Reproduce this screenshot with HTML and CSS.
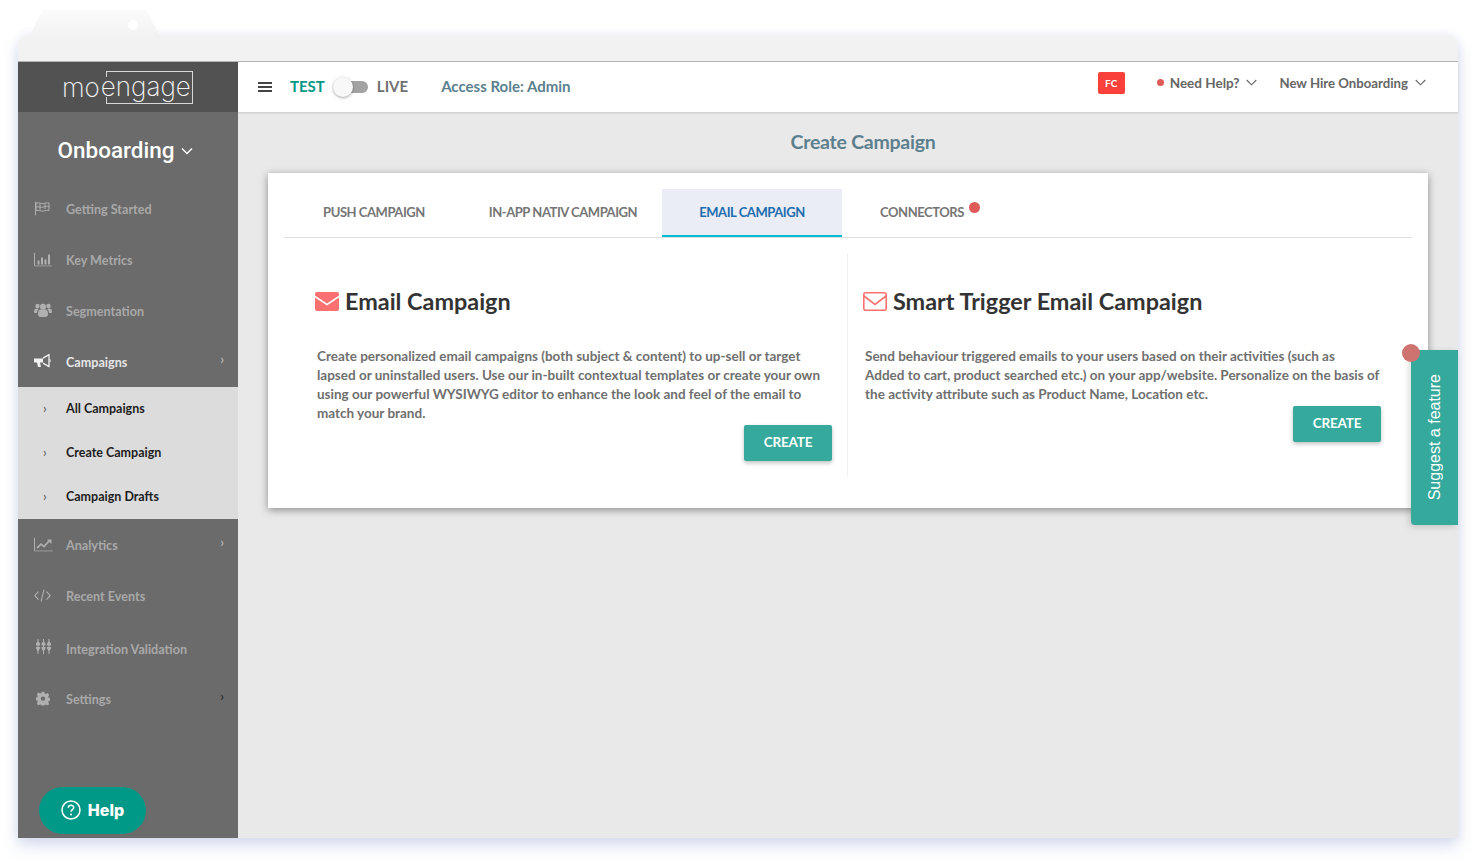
FILE: index.html
```html
<!DOCTYPE html>
<html>
<head>
    <meta charset="UTF-8">
    <title>Create Campaign</title>
    <link rel="stylesheet" href="styles.css">
</head>
<body>
    <div class="frame">
        <div class="notch"><span class="notch-dot"></span></div>
        <div class="strip"></div>
        <div class="app">
            <aside class="sidebar">
                <div class="logo"><span class="logo-mo">mo</span><span class="logo-box"><span class="logo-word">engage</span></span></div>
                <div class="workspace">Onboarding
                    <svg class="ws-caret" width="12" height="8" viewBox="0 0 12 8"><path d="M1 1.500l5 5 5-5" fill="none" stroke="#fff" stroke-width="1.400"/></svg>
                </div>
                <nav class="nav">
                    <div class="nav-item">
                        <svg class="nav-icon" width="18" height="14" viewBox="0 0 18 14"><path d="M1.500 0v14M2 1.500c3-1 5 1 7 .5s4-1 6-.5v7.500c-2-.5-4 0-6 .5s-4-1.500-7-.5zM2 5.500c3-1 5 1 7 0s4-1 6-.5M6 2v6M11 1.500v6" fill="none" stroke="#b0b0b0" stroke-width="1"/></svg>
                        <span>Getting Started</span>
                    </div>
                    <div class="nav-item">
                        <svg class="nav-icon" width="18" height="14" viewBox="0 0 18 14"><path d="M.5 0v13.500H18" fill="none" stroke="#b0b0b0"/><path d="M3.500 8h2v4h-2zM7 5h2v7H7zM10.500 7h2v5h-2zM14 2h2v10h-2z" fill="#b0b0b0"/></svg>
                        <span>Key Metrics</span>
                    </div>
                    <div class="nav-item">
                        <svg class="nav-icon" width="18" height="15" viewBox="0 0 18 15"><circle cx="3.500" cy="3" r="2.200" fill="#b0b0b0"/><circle cx="14.500" cy="3" r="2.200" fill="#b0b0b0"/><circle cx="9" cy="3.800" r="3" fill="#b0b0b0"/><path d="M0 9c0-3 1-3.500 3-3.500 1 0 1 .5 1.500 1-1 1-1.500 2-1.500 3.500H1c-.5 0-1-.3-1-1zM18 9c0-3-1-3.500-3-3.500-1 0-1 .5-1.500 1 1 1 1.500 2 1.500 3.500h2c.5 0 1-.3 1-1zM4 11c0-3 1-4.500 2.500-4.500h5C13 6.500 14 8 14 11c0 2-1 3-2.500 3h-5C5 14 4 13 4 11z" fill="#b0b0b0"/></svg>
                        <span>Segmentation</span>
                    </div>
                    <div class="nav-item nav-open">
                        <svg class="nav-icon" width="17" height="14" viewBox="0 0 17 14"><path d="M0 5h9v4H6l1 4.500H4L3 9H1c-.600 0-1-.4-1-1zM9 5l5-3.500" fill="#f2f2f2"/><path d="M9 4.500L15 1v12L9 9.500" fill="none" stroke="#f2f2f2" stroke-width="1.300"/><path d="M15.500 5.500c1 .5 1 2.500 0 3" fill="none" stroke="#f2f2f2"/></svg>
                        <span>Campaigns</span>
                        <span class="nav-arrow">&#8250;</span>
                    </div>
                    <div class="subnav">
                        <div class="sub-item"><span class="sub-arrow">&#8250;</span>All Campaigns</div>
                        <div class="sub-item"><span class="sub-arrow">&#8250;</span>Create Campaign</div>
                        <div class="sub-item"><span class="sub-arrow">&#8250;</span>Campaign Drafts</div>
                    </div>
                    <div class="nav-item">
                        <svg class="nav-icon" width="19" height="14" viewBox="0 0 19 14"><path d="M.5 0v13.500H19" fill="none" stroke="#b0b0b0"/><path d="M3 10.500l4-4 3 2.500 5-5.500" fill="none" stroke="#b0b0b0" stroke-width="1.600"/><path d="M13 2h4.500v4.500z" fill="#b0b0b0"/></svg>
                        <span>Analytics</span>
                        <span class="nav-arrow">&#8250;</span>
                    </div>
                    <div class="nav-item">
                        <svg class="nav-icon" width="17" height="13" viewBox="0 0 17 13"><path d="M4.500 2.500L.8 6.500l3.700 4M12.500 2.500l3.700 4-3.700 4M10 .5l-3 12" fill="none" stroke="#b0b0b0" stroke-width="1.100"/></svg>
                        <span>Recent Events</span>
                    </div>
                    <div class="nav-item nav-tall">
                        <svg class="nav-icon nav-icon-up" width="15" height="15" viewBox="0 0 15 15"><path d="M2 0v15M7.500 0v15M13 0v15" stroke="#b0b0b0" stroke-width="1"/><path d="M0 4.500L2 2l2 2.500v2H0zM5.500 4.500l2-2.500 2 2.500v2h-4zM11 4.500L13 2l2 2.500v2h-4zM0 8h4v1.500l-2 3-2-3zM5.500 8h4v1.500l-2 3-2-3zM11 8h4v1.500l-2 3-2-3z" fill="#b0b0b0"/></svg>
                        <span>Integration Validation</span>
                    </div>
                    <div class="nav-item">
                        <svg class="nav-icon nav-icon-gear" width="14" height="14" viewBox="0 0 14 14"><path fill-rule="evenodd" d="M5.800 0h2.400l.4 1.900 1.300.6 1.700-1 1.600 1.700-1 1.600.5 1.300 2 .5v2.400l-2 .4-.5 1.300 1 1.700-1.600 1.600-1.700-1-1.300.5-.4 2H5.800l-.4-2-1.300-.5-1.700 1L.8 11.900l1-1.700-.5-1.300-1.900-.4V6.100l1.900-.5.5-1.300-1-1.600 1.600-1.700 1.700 1 1.300-.6zM7 4.800a2.200 2.200 0 1 0 0 4.400 2.200 2.200 0 0 0 0-4.400z" fill="#b0b0b0"/></svg>
                        <span>Settings</span>
                        <span class="nav-arrow nav-arrow-dark">&#8250;</span>
                    </div>
                </nav>
                <div class="help-btn">
                    <svg width="20" height="20" viewBox="0 0 20 20"><circle cx="10" cy="10" r="9" fill="none" stroke="#fff" stroke-width="1.500"/><path d="M7.300 7.800c0-3.400 5.400-3.400 5.400-.2 0 2-2.700 2-2.700 4.200" fill="none" stroke="#fff" stroke-width="1.500"/><circle cx="10" cy="14.500" r="1" fill="#fff"/></svg>
                    <span>Help</span>
                </div>
            </aside>
            <div class="main">
                <header class="topbar">
                    <div class="burger"><i></i><i></i><i></i></div>
                    <span class="env-test">TEST</span>
                    <span class="toggle"><span class="toggle-knob"></span></span>
                    <span class="env-live">LIVE</span>
                    <span class="role">Access Role: Admin</span>
                    <span class="badge">FC</span>
                    <span class="top-link need-help"><span class="red-dot"></span>Need Help?
                        <svg width="11" height="7" viewBox="0 0 11 7"><path d="M.7 1l4.800 4.800L10.300 1" fill="none" stroke="#666" stroke-width="1.100"/></svg>
                    </span>
                    <span class="top-link project">New Hire Onboarding
                        <svg width="11" height="7" viewBox="0 0 11 7"><path d="M.7 1l4.800 4.800L10.300 1" fill="none" stroke="#666" stroke-width="1.100"/></svg>
                    </span>
                </header>
                <section class="content">
                    <h2 class="page-title">Create Campaign</h2>
                    <div class="card">
                        <div class="tabs">
                            <div class="tab tab-push">PUSH CAMPAIGN</div>
                            <div class="tab tab-inapp">IN-APP NATIV CAMPAIGN</div>
                            <div class="tab tab-active">EMAIL CAMPAIGN</div>
                            <div class="tab tab-conn">CONNECTORS<span class="tab-dot"></span></div>
                        </div>
                        <div class="columns">
                            <div class="col col-left">
                                <h3 class="col-title">
                                    <svg width="24" height="19" viewBox="0 0 24 19"><path d="M2 0h20c1.100 0 2 .9 2 2v1.500L12 11.500 0 3.500V2C0 .9.900 0 2 0zM0 5.500l12 8 12-8V17c0 1.100-.9 2-2 2H2c-1.100 0-2-.9-2-2z" fill="#fb7070"/></svg>
                                    Email Campaign
                                </h3>
                                <p class="col-text">Create personalized email campaigns (both subject &amp; content) to up-sell or target lapsed or uninstalled users. Use our in-built contextual templates or create your own using our powerful WYSIWYG editor to enhance the look and feel of the email to match your brand.</p>
                                <div class="col-action"><button class="create-btn">CREATE</button></div>
                            </div>
                            <div class="col col-right">
                                <h3 class="col-title">
                                    <svg width="24" height="19" viewBox="0 0 24 19"><rect x=".8" y=".8" width="22.400" height="17.400" rx="2" fill="none" stroke="#fb7070" stroke-width="1.600"/><path d="M1 4l11 8.500L23 4" fill="none" stroke="#fb7070" stroke-width="1.600"/></svg>
                                    Smart Trigger Email Campaign
                                </h3>
                                <p class="col-text">Send behaviour triggered emails to your users based on their activities (such as<br>Added to cart, product searched etc.) on your app/website. Personalize on the basis of the activity attribute such as Product Name, Location etc.</p>
                                <div class="col-action"><button class="create-btn">CREATE</button></div>
                            </div>
                        </div>
                    </div>
                </section>
            </div>
            <div class="suggest"><span class="suggest-dot"></span><span class="suggest-text">Suggest a feature</span></div>
        </div>
    </div>
</body>
</html>
```

FILE: styles.css
```css
* {
    box-sizing: border-box;
}
html, body {
    margin: 0;
    height: 100%;
    overflow: hidden;
}
body {
    background-color: #fff;
    font-family: 'Lato', 'Noto Sans', sans-serif;
    padding: 35px 18px 24px;
}
.frame {
    position: relative;
    height: 803px;
    box-shadow: 0 8px 16px rgba(120,140,200,0.28), 0 0 10px rgba(120,140,200,0.12);
    border-radius: 10px 10px 0 0;
}
.notch {
    position: absolute;
    left: 12px;
    top: -25px;
    width: 130px;
    height: 26px;
    background: linear-gradient(#fbfbfb, #f2f2f2);
    clip-path: polygon(12px 0, 116px 0, 130px 100%, 0 100%);
}
.notch-dot {
    position: absolute;
    left: 98px;
    top: 10px;
    width: 10px;
    height: 10px;
    border-radius: 50%;
    background-color: #fff;
}
.strip {
    height: 27px;
    background-color: #f2f2f2;
    border-bottom: 1px solid #b4b4b4;
    border-radius: 10px 10px 0 0;
}
.app {
    position: relative;
    display: flex;
    height: 776px;
}

/* sidebar */
.sidebar {
    position: relative;
    width: 220px;
    flex-shrink: 0;
    background-color: #6b6b6b;
}
.logo {
    height: 50px;
    background-color: #525252;
    display: flex;
    align-items: center;
    padding-left: 44px;
    color: #f5f5f5;
    font-family: 'Inter', sans-serif;
    font-weight: 200;
    font-size: 26px;
}
.logo-box {
    width: 87px;
    height: 33px;
    margin-left: 6px;
    line-height: 30px;
    border: 1px solid #d8d8d8;
    border-left: none;
    white-space: nowrap;
    background:
        linear-gradient(#d8d8d8, #d8d8d8) 0 0 / 1px 5px no-repeat,
        linear-gradient(#d8d8d8, #d8d8d8) 0 100% / 1px 6px no-repeat;
}
.logo-word {
    margin-left: -5px;
}
.workspace {
    height: 76px;
    display: flex;
    align-items: center;
    justify-content: center;
    gap: 6px;
    color: #fff;
    font-family: 'Roboto', sans-serif;
    font-size: 22.500px;
    font-weight: 500;
    padding-right: 6px;
}
.ws-caret {
    margin-top: 2px;
}
.nav {
    margin-top: -4px;
}
.nav-item {
    position: relative;
    height: 51px;
    display: flex;
    align-items: center;
    padding-left: 48px;
    color: #a9a9a9;
    font-size: 12.600px;
    font-weight: 700;
}
.nav-open {
    color: #e6e6e6;
    height: 50px;
}
.nav-tall {
    height: 52px;
    padding-top: 2px;
}
.nav-icon {
    position: absolute;
    left: 16px;
    top: 50%;
    transform: translateY(-60%);
}
.nav-icon-up {
    left: 18px;
}
.nav-icon-gear {
    left: 18px;
}
.nav-arrow {
    position: absolute;
    right: 14px;
    top: 14px;
    font-size: 13px;
    color: #b5b5b5;
}
.nav-arrow-dark {
    color: #333;
}
.subnav {
    background-color: #dcdcdc;
    height: 132px;
    margin-bottom: 1px;
}
.sub-item {
    position: relative;
    height: 44px;
    display: flex;
    align-items: center;
    padding: 0 0 2px 48px;
    color: #1d1d1d;
    font-size: 12.500px;
    font-weight: 700;
}
.sub-arrow {
    position: absolute;
    left: 25px;
    top: 13px;
    font-size: 13px;
    font-weight: 400;
    color: #555;
}
.help-btn {
    position: absolute;
    left: 21px;
    bottom: 4px;
    width: 107px;
    height: 47px;
    padding-bottom: 1px;
    border-radius: 24px;
    background-color: #009886;
    color: #fff;
    display: flex;
    align-items: center;
    justify-content: center;
    gap: 7px;
    font-family: 'Inter', sans-serif;
    font-weight: 800;
    font-size: 16px;
}

/* main area */
.main {
    flex: 1;
    background-color: #e9e9e9;
    min-width: 0;
}
.topbar {
    position: relative;
    height: 50px;
    background-color: #fff;
    display: flex;
    align-items: center;
    padding: 0 0 3px 20px;
    box-shadow: 0 1px 2px rgba(0,0,0,0.15);
    font-size: 15px;
    font-weight: 700;
}
.burger {
    width: 14px;
    margin: 2px 18px 0 0;
}
.burger i {
    display: block;
    height: 2px;
    margin: 2px 0;
    background-color: #444;
}
.env-test {
    color: #009886;
}
.toggle {
    position: relative;
    display: block;
    width: 30px;
    height: 12px;
    margin: 2px 9px 0 13px;
    border-radius: 6px;
    background-color: #a3a3a3;
}
.toggle-knob {
    position: absolute;
    left: -5px;
    top: -4px;
    width: 20px;
    height: 20px;
    border-radius: 50%;
    background-color: #f8f8f8;
    box-shadow: 0 1px 3px rgba(0,0,0,0.35);
}
.env-live {
    color: #707070;
}
.role {
    margin-left: 33px;
    color: #5c7f8e;
}
.badge {
    margin-left: auto;
    width: 27px;
    height: 22px;
    margin-top: -6px;
    border-radius: 2px;
    background-color: #f9403a;
    color: #fff;
    font-size: 10px;
    display: flex;
    align-items: center;
    justify-content: center;
}
.top-link {
    display: flex;
    align-items: center;
    gap: 7px;
    margin-top: -6px;
    color: #666;
    font-size: 13.500px;
}
.need-help {
    margin-left: 32px;
}
.project {
    margin-left: 22px;
    margin-right: 32px;
    font-size: 13.200px;
}
.red-dot {
    width: 7px;
    height: 7px;
    border-radius: 50%;
    background-color: #e05a5a;
    margin-right: -1px;
}
.content {
    padding: 0 30px;
}
.page-title {
    margin: 0;
    height: 61px;
    line-height: 60px;
    padding-left: 30px;
    text-align: center;
    color: #5c7f8e;
    font-size: 19.500px;
    letter-spacing: -0.25px;
    font-weight: 700;
}
.card {
    height: 335px;
    background-color: #fff;
    padding: 16px 16px 0;
    box-shadow: 0 2px 8px rgba(0,0,0,0.4);
}
.tabs {
    display: flex;
    height: 49px;
    border-bottom: 1px solid #dedede;
}
.tab {
    height: 48px;
    padding-bottom: 2px;
    display: flex;
    align-items: center;
    justify-content: center;
    color: #757575;
    font-size: 13px;
    letter-spacing: -0.45px;
    font-weight: 700;
}
.tab-push { width: 180px; }
.tab-inapp { width: 198px; }
.tab-active {
    width: 180px;
    padding-bottom: 0;
    color: #1c6cae;
    background-color: #eaedf6;
    border-bottom: 2px solid #00bcd4;
}
.tab-conn {
    position: relative;
    width: 160px;
}
.tab-dot {
    position: absolute;
    left: 127px;
    top: 13px;
    width: 11px;
    height: 11px;
    border-radius: 50%;
    background-color: #e05a5a;
}
.columns {
    display: flex;
    margin-top: 15px;
    height: 224px;
}
.col-left {
    width: 564px;
    padding: 32px 15px 0 31px;
    border-right: 1px solid #f0f0f0;
}
.col-right {
    flex: 1;
    padding: 32px 31px 0 15px;
}
.col-title {
    margin: 0;
    display: flex;
    align-items: center;
    gap: 6px;
    height: 32px;
    color: #333;
    font-size: 23.400px;
    font-weight: 700;
}
.col-text {
    margin: 30px 0 0 2px;
    color: #6f6f6f;
    font-size: 13.500px;
    font-weight: 700;
    line-height: 19px;
}
.col-action {
    display: flex;
    justify-content: flex-end;
    margin-top: 2px;
}
.create-btn {
    width: 88px;
    height: 36px;
    padding: 0 0 2px;
    border: none;
    border-radius: 2px;
    background-color: #35a99c;
    color: #fff;
    font-family: inherit;
    font-size: 13.500px;
    letter-spacing: -0.2px;
    font-weight: 700;
    box-shadow: 0 2px 4px rgba(0,0,0,0.25);
}

/* floating feedback tab */
.suggest {
    position: absolute;
    right: 0;
    top: 288px;
    width: 47px;
    height: 175px;
    background-color: #35a99c;
    border-radius: 0 0 0 4px;
    display: flex;
    align-items: center;
    justify-content: center;
    box-shadow: -2px 2px 6px rgba(0,0,0,0.15);
}
.suggest-dot {
    position: absolute;
    left: -9px;
    top: -6px;
    width: 18px;
    height: 18px;
    border-radius: 50%;
    background-color: #cf7370;
}
.suggest-text {
    writing-mode: vertical-rl;
    transform: rotate(180deg);
    color: #fff;
    font-family: 'Liberation Sans', sans-serif;
    font-size: 16px;
}
```
